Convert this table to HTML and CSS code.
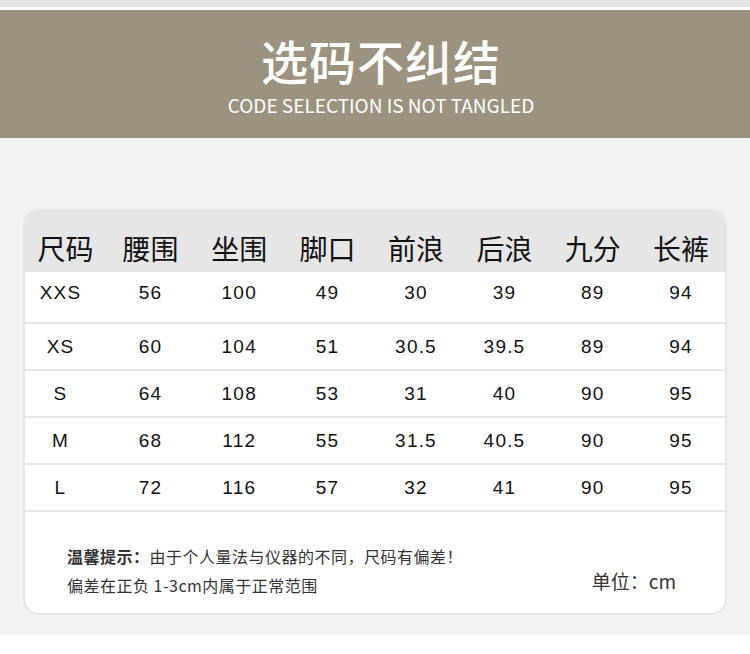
FILE: index.html
```html
<!DOCTYPE html>
<html lang="zh">
<head>
<meta charset="utf-8">
<title>选码不纠结</title>
<link rel="stylesheet" href="styles.css">
</head>
<body>
<div class="top-strip"></div>
<header class="banner">
  <h1 class="banner-title">选码不纠结</h1>
  <p class="banner-sub">CODE SELECTION IS NOT TANGLED</p>
</header>
<main class="page">
  <section class="card">
    <div class="row head">
      <span class="cell">尺码</span><span class="cell">腰围</span><span class="cell">坐围</span><span class="cell">脚口</span><span class="cell">前浪</span><span class="cell">后浪</span><span class="cell">九分</span><span class="cell">长裤</span>
    </div>
    <div class="row data first">
      <span class="cell size">XXS</span><span class="cell">56</span><span class="cell">100</span><span class="cell">49</span><span class="cell">30</span><span class="cell">39</span><span class="cell">89</span><span class="cell">94</span>
    </div>
    <div class="row data">
      <span class="cell size">XS</span><span class="cell">60</span><span class="cell">104</span><span class="cell">51</span><span class="cell">30.5</span><span class="cell">39.5</span><span class="cell">89</span><span class="cell">94</span>
    </div>
    <div class="row data">
      <span class="cell size">S</span><span class="cell">64</span><span class="cell">108</span><span class="cell">53</span><span class="cell">31</span><span class="cell">40</span><span class="cell">90</span><span class="cell">95</span>
    </div>
    <div class="row data">
      <span class="cell size">M</span><span class="cell">68</span><span class="cell">112</span><span class="cell">55</span><span class="cell">31.5</span><span class="cell">40.5</span><span class="cell">90</span><span class="cell">95</span>
    </div>
    <div class="row data">
      <span class="cell size">L</span><span class="cell">72</span><span class="cell">116</span><span class="cell">57</span><span class="cell">32</span><span class="cell">41</span><span class="cell">90</span><span class="cell">95</span>
    </div>
    <div class="notes">
      <div class="notes-text">
        <p class="note-line"><b class="note-label">温馨提示：</b>由于个人量法与仪器的不同，尺码有偏差！</p>
        <p class="note-line">偏差在正负 1-3cm内属于正常范围</p>
      </div>
      <div class="unit">单位：cm</div>
    </div>
  </section>
</main>
</body>
</html>
```
FILE: styles.css
```css
* { box-sizing: border-box; }
html, body { margin: 0; padding: 0; background: #ffffff; }
body {
  width: 750px;
  height: 654px;
  overflow: hidden;
  font-family: "Noto Sans CJK SC", "Noto Sans", sans-serif;
}
.top-strip {
  height: 7px;
  background: #e5e5e5;
  margin-bottom: 3px;
}
.banner {
  height: 128px;
  background: #9b937f;
  color: #ffffff;
  display: flex;
  flex-direction: column;
  align-items: center;
  padding: 24px 0 0 12px;
}
.banner-title {
  margin: 0;
  font-size: 47px;
  line-height: 52px;
  font-weight: 500;
  letter-spacing: 1px;
}
.banner-sub {
  margin: 8px 0 0 0;
  font-size: 19px;
  line-height: 22px;
  font-weight: 400;
  letter-spacing: 0;
}
.page {
  background: #f2f2f2;
  height: 497px;
  padding: 71px 0 0 23px;
}
.card {
  width: 704px;
  height: 406px;
  background: #e6e6e6;
  border-radius: 16px;
  padding: 0 2px 2px 2px;
  display: flex;
  flex-direction: column;
  gap: 2px;
  overflow: hidden;
}
.row {
  display: grid;
  grid-template-columns: 81px 89px 88.5px 88px 89px 88px 88.5px 88px;
  align-items: center;
  text-align: center;
  color: #111111;
}
.row.head {
  height: 63px;
  font-size: 28px;
  font-weight: 400;
  margin-bottom: -2px;
  padding-top: 14px;
}
.row.data {
  height: 45px;
  background: #ffffff;
  font-family: "Liberation Sans", Arial, sans-serif;
  font-size: 19px;
  letter-spacing: 1.2px;
}
.row.data.first {
  height: 50px;
  padding-bottom: 8px;
}
.cell.size { padding-right: 10px; }
.notes {
  flex: 1;
  background: #ffffff;
  border-radius: 0 0 14px 14px;
  display: flex;
  justify-content: space-between;
  align-items: flex-start;
  padding: 30px 49px 0 42px;
  color: #333333;
}
.note-line {
  margin: 0;
  font-size: 16px;
  line-height: 28.5px;
  letter-spacing: 0.5px;
}
.note-label { font-weight: 700; }
.unit {
  font-size: 19px;
  line-height: 28px;
  margin-top: 25px;
}
```
